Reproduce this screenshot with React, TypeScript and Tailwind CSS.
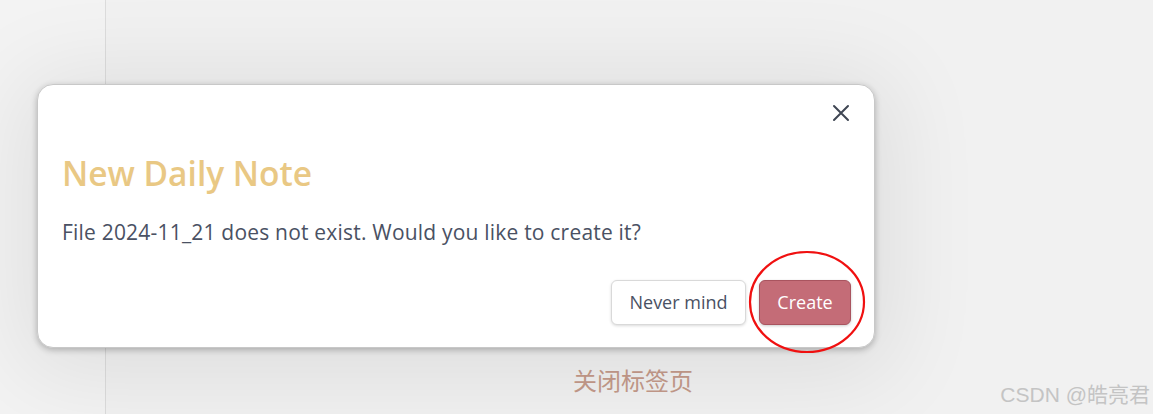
import React from "react";

export default function App() {
  return (
    <div
      className="relative w-[1153px] h-[414px] overflow-hidden bg-[#f1f1f1] flex"
      style={{ fontFamily: '"Open Sans", "Noto Sans", "Noto Sans CJK SC", sans-serif' }}
    >
      <div className="w-[106px] h-full border-r border-[#dcdcdc] bg-[#f3f3f3]" />
      <div className="flex-1 h-full relative bg-[#f1f1f1]">
        <div className="absolute left-[467px] top-[362px] text-[24px] text-[#c49a8a]"
          style={{ fontFamily: '"Noto Sans CJK SC", sans-serif' }}>
          关闭标签页
        </div>
      </div>

      {/* shade */}
      <div className="absolute left-[37px] top-[84px] w-[838px] h-[264px] rounded-[16px] shadow-[0_10px_90px_20px_rgba(0,0,0,0.08)]" />

      {/* modal */}
      <div className="absolute left-[37px] top-[84px] w-[838px] h-[264px] rounded-[16px] bg-white border border-[#c8c8c8] shadow-[0_2px_6px_rgba(0,0,0,0.25)] flex flex-col px-[24px]">
        <div className="flex justify-end pt-[16px] -mr-[3px]">
          <svg width="24" height="24" viewBox="0 0 24 24" fill="none" stroke="#3f4653" strokeWidth="2" strokeLinecap="round">
            <path d="M5 5 L19 19 M19 5 L5 19" />
          </svg>
        </div>
        <div className="mt-[28px] text-[33.5px] font-semibold text-[#e9c884] leading-[40px]">New Daily Note</div>
        <div className="mt-[25px] text-[21px] text-[#4a5163] leading-[28px] tracking-[0.2px]">
          File 2024-11_21 does not exist. Would you like to create it?
        </div>
        <div className="flex justify-end gap-[13px] mt-[34px] -mr-[1px]">
          <button className="h-[45px] w-[135px] rounded-[6px] bg-white border border-[#d9d9d9] shadow-[0_1px_3px_rgba(0,0,0,0.15)] text-[18px] text-[#4a5163]">
            Never mind
          </button>
          <button className="h-[45px] w-[92px] rounded-[6px] bg-[#c46c77] border border-[#a9545f] shadow-[0_1px_3px_rgba(0,0,0,0.2)] text-[18px] text-white">
            Create
          </button>
        </div>
      </div>

      {/* red annotation ellipse */}
      <svg className="absolute left-[748px] top-[250px]" width="120" height="106" viewBox="0 0 120 106">
        <ellipse cx="59" cy="52" rx="57" ry="50" fill="none" stroke="#f01010" strokeWidth="2.2" />
      </svg>

      {/* watermark */}
      <div className="absolute right-[3px] top-[379px] text-[21px] text-[#c4c4c4]"
        style={{ fontFamily: '"Liberation Sans", "Noto Sans CJK SC", sans-serif' }}>
        CSDN @皓亮君
      </div>
    </div>
  );
}
